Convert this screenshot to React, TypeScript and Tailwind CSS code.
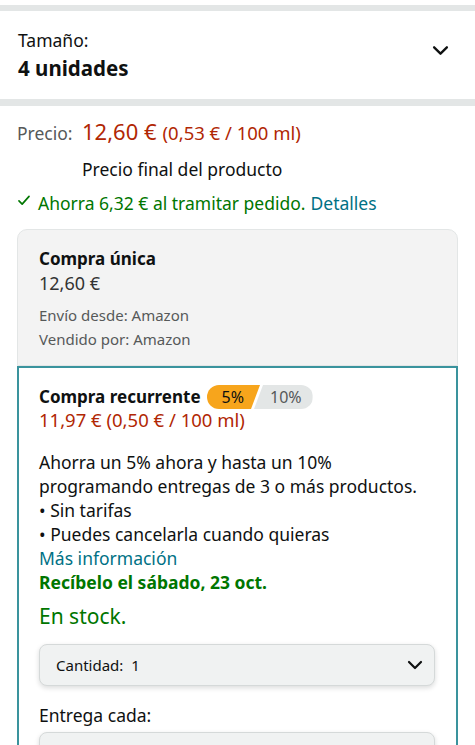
import React from "react";

const Chevron = ({ className }: { className?: string }) => (
  <svg viewBox="0 0 16 10" className={className} fill="none" stroke="currentColor" strokeWidth="2.2" strokeLinecap="round" strokeLinejoin="round">
    <path d="M2 2l6 6 6-6" />
  </svg>
);

export default function App() {
  return (
    <div className="w-[475px] bg-white text-[#0F1111]" style={{ fontFamily: '"Noto Sans", "Open Sans", sans-serif' }}>
      <div className="h-[5px] bg-white" />
      <div className="h-[6px] bg-[#E3E6E6]" />
      <div className="flex items-center justify-between h-[88px] pl-[18px] pr-[26px]">
        <div className="flex flex-col">
          <span className="text-[17.5px] leading-[26px]">Tamaño:</span>
          <span className="text-[20.5px] leading-[30px] font-bold">4 unidades</span>
        </div>
        <Chevron className="w-[17px] h-[11px] text-[#0F1111] mb-[10px]" />
      </div>
      <div className="h-[7px] bg-[#E3E6E6]" />

      <div className="px-[17px] pt-[10px]">
        <div className="flex items-baseline h-[30px]">
          <span className="text-[17.5px] text-[#565959] w-[65px]">Precio:</span>
          <span className="text-[22px] text-[#B12704] leading-[30px]">12,60 €</span>
          <span className="text-[18.5px] text-[#B12704] ml-[6px]">(0,53 € / 100 ml)</span>
        </div>
        <div className="pl-[65px] text-[17.5px] leading-[24px] mt-[11px]">Precio final del producto</div>
        <div className="flex items-center h-[24px] text-[17.5px] leading-[24px] mt-[10px]">
          <svg viewBox="0 0 14 12" className="w-[14px] h-[11px] mr-[7px] mb-[6px]" fill="none" stroke="#007600" strokeWidth="1.8" strokeLinecap="round" strokeLinejoin="round">
            <path d="M1.5 6.5l3.5 3.5 7.5-8.5" />
          </svg>
          <span className="text-[#007600]">Ahorra 6,32 € al tramitar pedido.</span>
          <span className="text-[#007185] ml-[5px]">Detalles</span>
        </div>

        <div className="mt-[14px] rounded-t-[10px] border border-[#E3E6E6] bg-[#F3F3F3] pl-[21px] pt-[17px] pb-[14px]">
          <div className="text-[17px] font-bold leading-[24px]">Compra única</div>
          <div className="text-[18px] leading-[24px] text-[#333]">12,60 €</div>
          <div className="mt-[8px] text-[15px] leading-[24px] text-[#565959]">Envío desde: Amazon</div>
          <div className="text-[15px] leading-[24px] text-[#565959]">Vendido por: Amazon</div>
        </div>

        <div className="border-2 border-solid border-[#3a939d] pl-[20px] pr-[20px] pt-[17px] pb-[40px]">
          <div className="flex items-center h-[24px]">
            <span className="text-[17px] font-bold">Compra recurrente</span>
            <div className="ml-[6px] flex h-[24px] text-[16px]">
              <div className="flex items-center bg-[#F7A51C] rounded-l-full pl-[15px] pr-[16px] text-[#0F1111]" style={{ clipPath: "polygon(0 0, 100% 0, calc(100% - 9px) 100%, 0 100%)", marginRight: "-6px" }}>
                5%
              </div>
              <div className="flex items-center bg-[#E3E6E6] rounded-r-full pl-[16px] pr-[11px] text-[#565959]" style={{ clipPath: "polygon(9px 0, 100% 0, 100% 100%, 0 100%)" }}>
                10%
              </div>
            </div>
          </div>
          <div className="text-[18.5px] leading-[24px] text-[#B12704] mt-[-1px]">11,97 € (0,50 € / 100 ml)</div>

          <div className="mt-[18px] text-[17.5px] leading-[24px]">
            <div>Ahorra un 5% ahora y hasta un 10%</div>
            <div>programando entregas de 3 o más productos.</div>
            <div>• Sin tarifas</div>
            <div>• Puedes cancelarla cuando quieras</div>
            <div className="text-[#007185]">Más información</div>
            <div className="text-[#007600] font-bold">Recíbelo el sábado, 23 oct.</div>
          </div>

          <div className="mt-[7px] text-[21px] leading-[30px] text-[#007600]">En stock.</div>

          <div className="mt-[13px] mr-[1px] flex items-center justify-between h-[42px] rounded-[8px] border border-[#D5D9D9] bg-[#F0F2F2] pl-[16px] pr-[11px] shadow-[0_2px_5px_rgba(15,17,17,0.15)]">
            <span className="text-[15px] text-[#0F1111]">Cantidad:&nbsp; 1</span>
            <Chevron className="w-[16px] h-[10px] text-[#0F1111]" />
          </div>

          <div className="mt-[17px] text-[17.5px] leading-[24px]">Entrega cada:</div>
          <div className="mt-[5px] mr-[1px] h-[42px] rounded-[8px] border border-[#D5D9D9] bg-[#F0F2F2] shadow-[0_2px_5px_rgba(15,17,17,0.15)]" />
        </div>
      </div>
    </div>
  );
}
